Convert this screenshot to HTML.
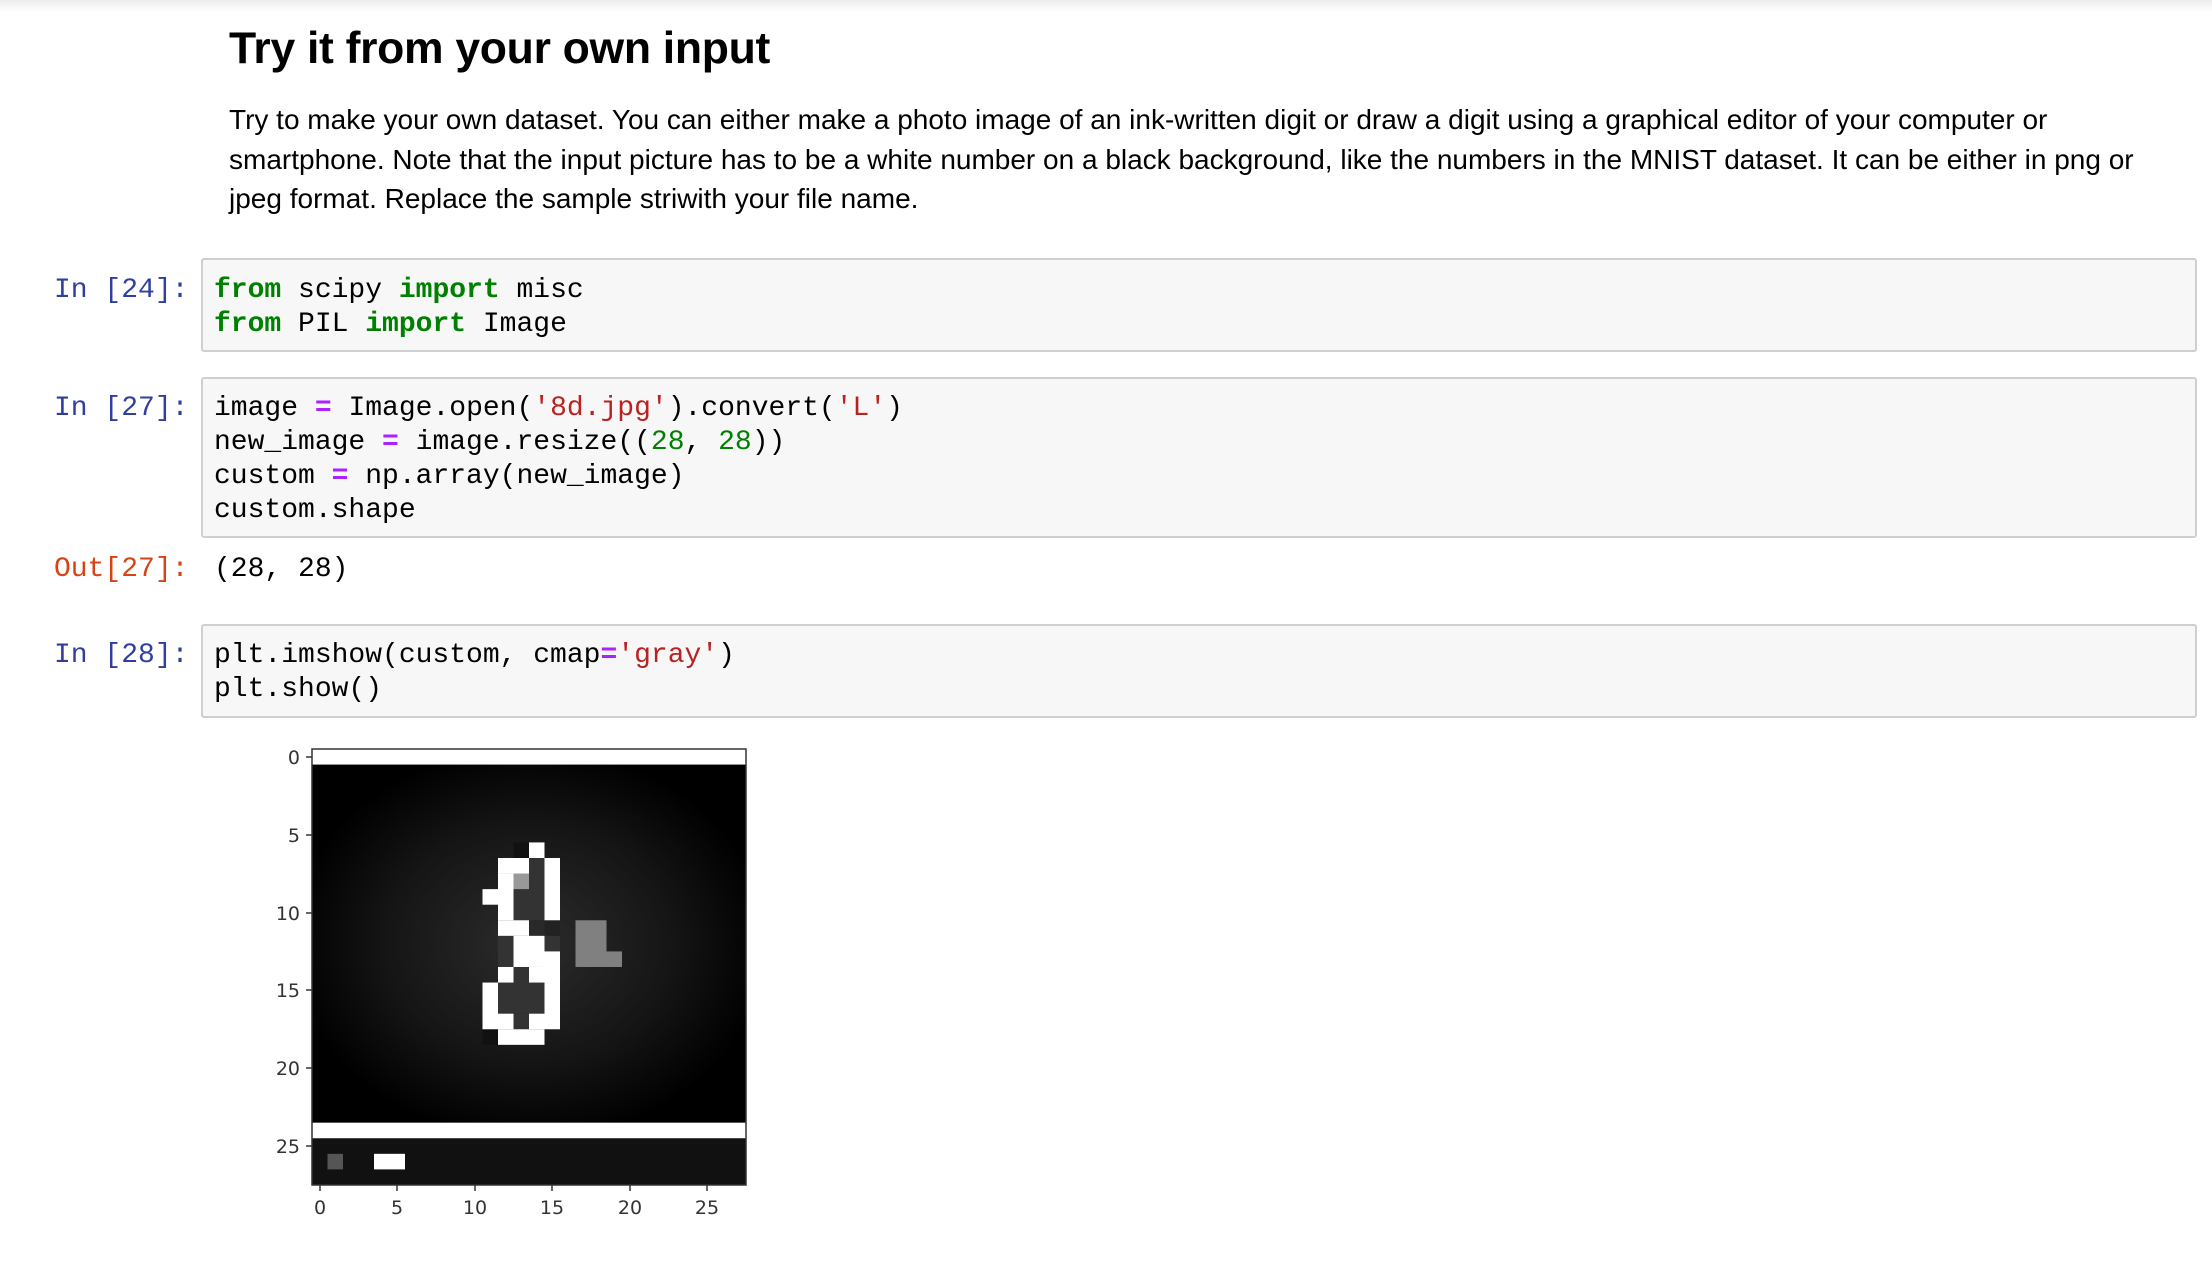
<!DOCTYPE html>
<html><head><meta charset="utf-8"><style>
html,body{margin:0;padding:0;background:#fff;}
body{width:2212px;height:1274px;position:relative;overflow:hidden;font-family:"Liberation Sans",sans-serif;}
.topshade{position:absolute;left:0;top:0;width:2212px;height:12px;background:linear-gradient(#ececec,#fff);}
h1{position:absolute;left:229px;top:24px;margin:0;font-size:44.5px;font-weight:bold;color:#000;letter-spacing:-0.3px;white-space:nowrap;}
p{position:absolute;left:229px;top:100px;margin:0;font-size:28px;line-height:39.5px;color:#000;white-space:nowrap;}
.box{position:absolute;left:201px;width:1996px;background:#f7f7f7;border:2px solid #cfcfcf;border-radius:3px;box-sizing:border-box;}
.code{position:absolute;left:214px;font-family:"Liberation Mono",monospace;font-size:28px;line-height:34px;white-space:pre;color:#000;}
.pr{position:absolute;left:54px;font-family:"Liberation Mono",monospace;font-size:28px;line-height:34px;white-space:pre;}
.in{color:#303F9F}.out{color:#D84315}
.k{color:#008000;font-weight:bold}.s{color:#BA2121}.n{color:#008000}.o{color:#AA22FF;font-weight:bold}
</style></head><body>
<div class="topshade"></div>
<h1>Try it from your own input</h1>
<p>Try to make your own dataset. You can either make a photo image of an ink-written digit or draw a digit using a graphical editor of your computer or<br>smartphone. Note that the input picture has to be a white number on a black background, like the numbers in the MNIST dataset. It can be either in png or<br>jpeg format. Replace the sample striwith your file name.</p>

<div class="box" style="top:258px;height:94px"></div>
<div class="pr in" style="top:274px">In [24]:</div>
<div class="code" style="top:274px"><span class="k">from</span> scipy <span class="k">import</span> misc
<span class="k">from</span> PIL <span class="k">import</span> Image</div>

<div class="box" style="top:377px;height:161px"></div>
<div class="pr in" style="top:392px">In [27]:</div>
<div class="code" style="top:392px">image <span class="o">=</span> Image.open(<span class="s">'8d.jpg'</span>).convert(<span class="s">'L'</span>)
new_image <span class="o">=</span> image.resize((<span class="n">28</span>, <span class="n">28</span>))
custom <span class="o">=</span> np.array(new_image)
custom.shape</div>
<div class="pr out" style="top:553px">Out[27]:</div>
<div class="code" style="top:553px">(28, 28)</div>

<div class="box" style="top:624px;height:94px"></div>
<div class="pr in" style="top:639px">In [28]:</div>
<div class="code" style="top:639px">plt.imshow(custom, cmap<span class="o">=</span><span class="s">'gray'</span>)
plt.show()</div>

<svg style="position:absolute;left:0;top:0" width="2212" height="1274">
<defs><radialGradient id="g" cx="0.5" cy="0.5" r="0.55"><stop offset="0" stop-color="#2c2c2c"/><stop offset="0.6" stop-color="#151515"/><stop offset="1" stop-color="#000"/></radialGradient></defs>
<g transform="translate(312,749) scale(15.5,15.57)">
<rect x="0" y="0" width="28" height="28" fill="#111"/>
<rect x="0" y="1" width="28" height="23" fill="url(#g)"/>
<rect x="0" y="0" width="28" height="1" fill="#fff"/>
<rect x="0" y="24" width="28" height="1" fill="#fff"/>
<rect x="1" y="26" width="1" height="1" fill="#555"/>
<rect x="4" y="26" width="2" height="1" fill="#fff"/>
<g fill="#333">
<rect x="14" y="7" width="1" height="4"/><rect x="13" y="9" width="1" height="2"/>
<rect x="15" y="11" width="1" height="1" fill="#222"/><rect x="12" y="12" width="1" height="2"/><rect x="15" y="12" width="1" height="1"/>
<rect x="13" y="14" width="1" height="1"/><rect x="12" y="15" width="3" height="2"/><rect x="13" y="17" width="1" height="1"/>
</g>
<rect x="13" y="6" width="1" height="1" fill="#111"/><rect x="11" y="18" width="1" height="1" fill="#111"/>
<rect x="13" y="8" width="1" height="1" fill="#999"/>
<g fill="#808080"><rect x="17" y="11" width="2" height="3"/><rect x="19" y="13" width="1" height="1"/></g>
<g fill="#fff">
<rect x="14" y="6" width="1" height="1"/>
<rect x="12" y="7" width="2" height="1"/><rect x="15" y="7" width="1" height="4"/>
<rect x="12" y="8" width="1" height="3"/><rect x="11" y="9" width="1" height="1"/>
<rect x="13" y="11" width="1" height="1"/><rect x="12" y="11" width="1" height="1"/>
<rect x="13" y="12" width="2" height="2"/><rect x="15" y="13" width="1" height="5"/>
<rect x="12" y="14" width="1" height="1"/><rect x="14" y="14" width="1" height="1"/>
<rect x="11" y="15" width="1" height="3"/><rect x="12" y="17" width="1" height="1"/><rect x="14" y="17" width="1" height="1"/>
<rect x="12" y="18" width="3" height="1"/>
</g>
</g>
<rect x="312" y="749" width="434" height="436" fill="none" stroke="#333" stroke-width="1.5"/>
<g stroke="#333" stroke-width="1.5">
<line x1="306" y1="757" x2="312" y2="757"/><line x1="306" y1="835" x2="312" y2="835"/><line x1="306" y1="913" x2="312" y2="913"/><line x1="306" y1="990" x2="312" y2="990"/><line x1="306" y1="1068" x2="312" y2="1068"/><line x1="306" y1="1146" x2="312" y2="1146"/>
<line x1="320" y1="1185" x2="320" y2="1191"/><line x1="397" y1="1185" x2="397" y2="1191"/><line x1="475" y1="1185" x2="475" y2="1191"/><line x1="552" y1="1185" x2="552" y2="1191"/><line x1="630" y1="1185" x2="630" y2="1191"/><line x1="707" y1="1185" x2="707" y2="1191"/>
</g>
<g font-family="DejaVu Sans,sans-serif" font-size="19" fill="#333" text-anchor="end">
<text x="300" y="764">0</text><text x="300" y="842">5</text><text x="300" y="920">10</text><text x="300" y="997">15</text><text x="300" y="1075">20</text><text x="300" y="1153">25</text>
</g>
<g font-family="DejaVu Sans,sans-serif" font-size="19" fill="#333" text-anchor="middle">
<text x="320" y="1214">0</text><text x="397" y="1214">5</text><text x="475" y="1214">10</text><text x="552" y="1214">15</text><text x="630" y="1214">20</text><text x="707" y="1214">25</text>
</g>
</svg>
</body></html>
